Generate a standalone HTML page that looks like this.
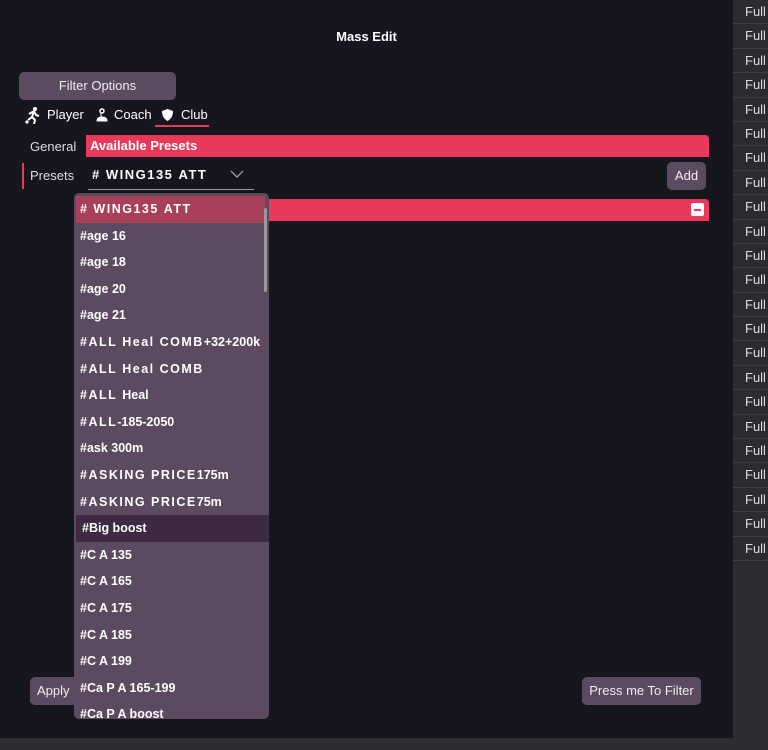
<!DOCTYPE html>
<html><head><meta charset="utf-8"><style>
*{margin:0;padding:0;box-sizing:border-box}
body{width:768px;height:750px;background:#2c2d31;font-family:"Liberation Sans",sans-serif;position:relative;overflow:hidden;color:#fff}
.main{position:absolute;left:0;top:0;width:733px;height:738px;background:#16161e}
.abs{position:absolute}
.title{left:0;width:733px;top:29px;text-align:center;font-weight:bold;font-size:13px}
.btn{background:#5c4a60;border-radius:5px;color:#eee;font-size:13px;text-align:center}
.right{position:absolute;left:733px;top:0;width:35px;height:565px;background:#2b2c30}
.right div{height:24.4px;border-bottom:1px solid #3d3e44;font-size:13px;color:#ddd;padding:4px 0 0 12px;white-space:nowrap;overflow:hidden}
.dd{left:74px;top:193px;width:195px;height:526px;background:#5c4a60;border-radius:5px;overflow:hidden}
.dd div{height:26.6px;line-height:26.6px;padding-left:6px;font-weight:bold;font-size:12.5px;color:#fff;white-space:nowrap}
.sp{letter-spacing:1.5px}
</style></head><body>
<div class="main">
<div class="abs title">Mass Edit</div>
<div class="abs btn" style="left:19px;top:72px;width:157px;height:28px;line-height:28px">Filter Options</div>
<svg class="abs" style="left:23px;top:106px" width="18" height="18" viewBox="0 0 18 18"><circle cx="12" cy="3" r="2" fill="#fff"/><path d="M6 8l5-3 2 4 3 1M11 5l-2 6 3 3-1 4M9 11l-4 3" stroke="#fff" stroke-width="2" fill="none"/><circle cx="4" cy="16" r="1.6" fill="#fff"/></svg>
<div class="abs" style="left:47px;top:107px;font-size:13px">Player</div>
<svg class="abs" style="left:96px;top:108px" width="12" height="14" viewBox="0 0 12 14"><circle cx="6" cy="3" r="2" fill="none" stroke="#fff" stroke-width="1.5"/><path d="M5 5v4M1 13c0-3 2-4 5-4s5 1 5 4z" stroke="#fff" fill="#fff"/></svg>
<div class="abs" style="left:114px;top:107px;font-size:13px">Coach</div>
<svg class="abs" style="left:161px;top:108px" width="13" height="14" viewBox="0 0 13 14"><path d="M6.5 1L12 3c0 5-2 8-5.5 10C3 11 1 8 1 3z" fill="#fff"/></svg>
<div class="abs" style="left:181px;top:107px;font-size:13px">Club</div>
<div class="abs" style="left:155px;top:125px;width:54px;height:2px;background:#e8395a"></div>
<div class="abs" style="left:30px;top:139px;font-size:13px;color:#ddd">General</div>
<div class="abs" style="left:86px;top:135px;width:623px;height:22px;background:#e8395a;border-radius:0 4px 0 0;font-weight:bold;font-size:13px;padding:3px 0 0 4px">Available Presets</div>
<div class="abs" style="left:22px;top:163px;width:2px;height:26px;background:#e8395a"></div>
<div class="abs" style="left:30px;top:168px;font-size:13px;color:#ddd">Presets</div>
<div class="abs sp" style="left:92px;top:167px;font-weight:bold;font-size:13px">#&nbsp;WING135&nbsp;ATT</div>
<svg class="abs" style="left:230px;top:170px" width="14" height="9" viewBox="0 0 14 9"><path d="M1 1l6 6 6-6" stroke="#aaa" fill="none" stroke-width="1.2"/></svg>
<div class="abs" style="left:88px;top:189px;width:166px;height:1px;background:#999"></div>
<div class="abs btn" style="left:667px;top:162px;width:39px;height:28px;line-height:28px">Add</div>
<div class="abs" style="left:86px;top:199px;width:623px;height:22px;background:#e8395a;border-radius:0 4px 0 0"></div>
<div class="abs" style="left:691px;top:203px;width:13px;height:13px;background:#fff;border-radius:2px"><div style="margin:5.5px 3px;height:2px;background:#e8395a"></div></div>
<div class="abs btn" style="left:30px;top:677px;width:50px;height:28px;line-height:28px;text-align:left;padding-left:7px">Apply</div>
<div class="abs btn" style="left:582px;top:677px;width:119px;height:28px;line-height:28px">Press me To Filter</div>
<div class="abs dd">
<div class="sp" style="background:#a8405a;margin:3px 4px 0 2px;padding-left:4px">#&nbsp;WING135&nbsp;ATT</div>
<div>#age 16</div><div>#age 18</div><div>#age 20</div><div>#age 21</div>
<div><span class="sp">#ALL&nbsp;Heal&nbsp;COMB</span>+32+200k</div>
<div class="sp">#ALL&nbsp;Heal&nbsp;COMB</div>
<div><span class="sp">#ALL&nbsp;</span>Heal</div>
<div><span class="sp">#ALL</span>-185-2050</div>
<div>#ask 300m</div>
<div><span class="sp">#ASKING&nbsp;PRICE</span>175m</div>
<div><span class="sp">#ASKING&nbsp;PRICE</span>75m</div>
<div style="background:#3e2a45;margin-left:2px">#Big boost</div>
<div>#C A 135</div><div>#C A 165</div><div>#C A 175</div><div>#C A 185</div><div>#C A 199</div>
<div>#Ca P A 165-199</div><div>#Ca P A boost</div>
</div>
<div class="abs" style="left:264px;top:208px;width:3px;height:84px;background:#999;border-radius:2px"></div>
</div>
<div class="right">
<div>Full</div><div>Full</div><div>Full</div><div>Full</div><div>Full</div><div>Full</div><div>Full</div><div>Full</div><div>Full</div><div>Full</div><div>Full</div><div>Full</div><div>Full</div><div>Full</div><div>Full</div><div>Full</div><div>Full</div><div>Full</div><div>Full</div><div>Full</div><div>Full</div><div>Full</div><div>Full</div>
</div>
</body></html>
